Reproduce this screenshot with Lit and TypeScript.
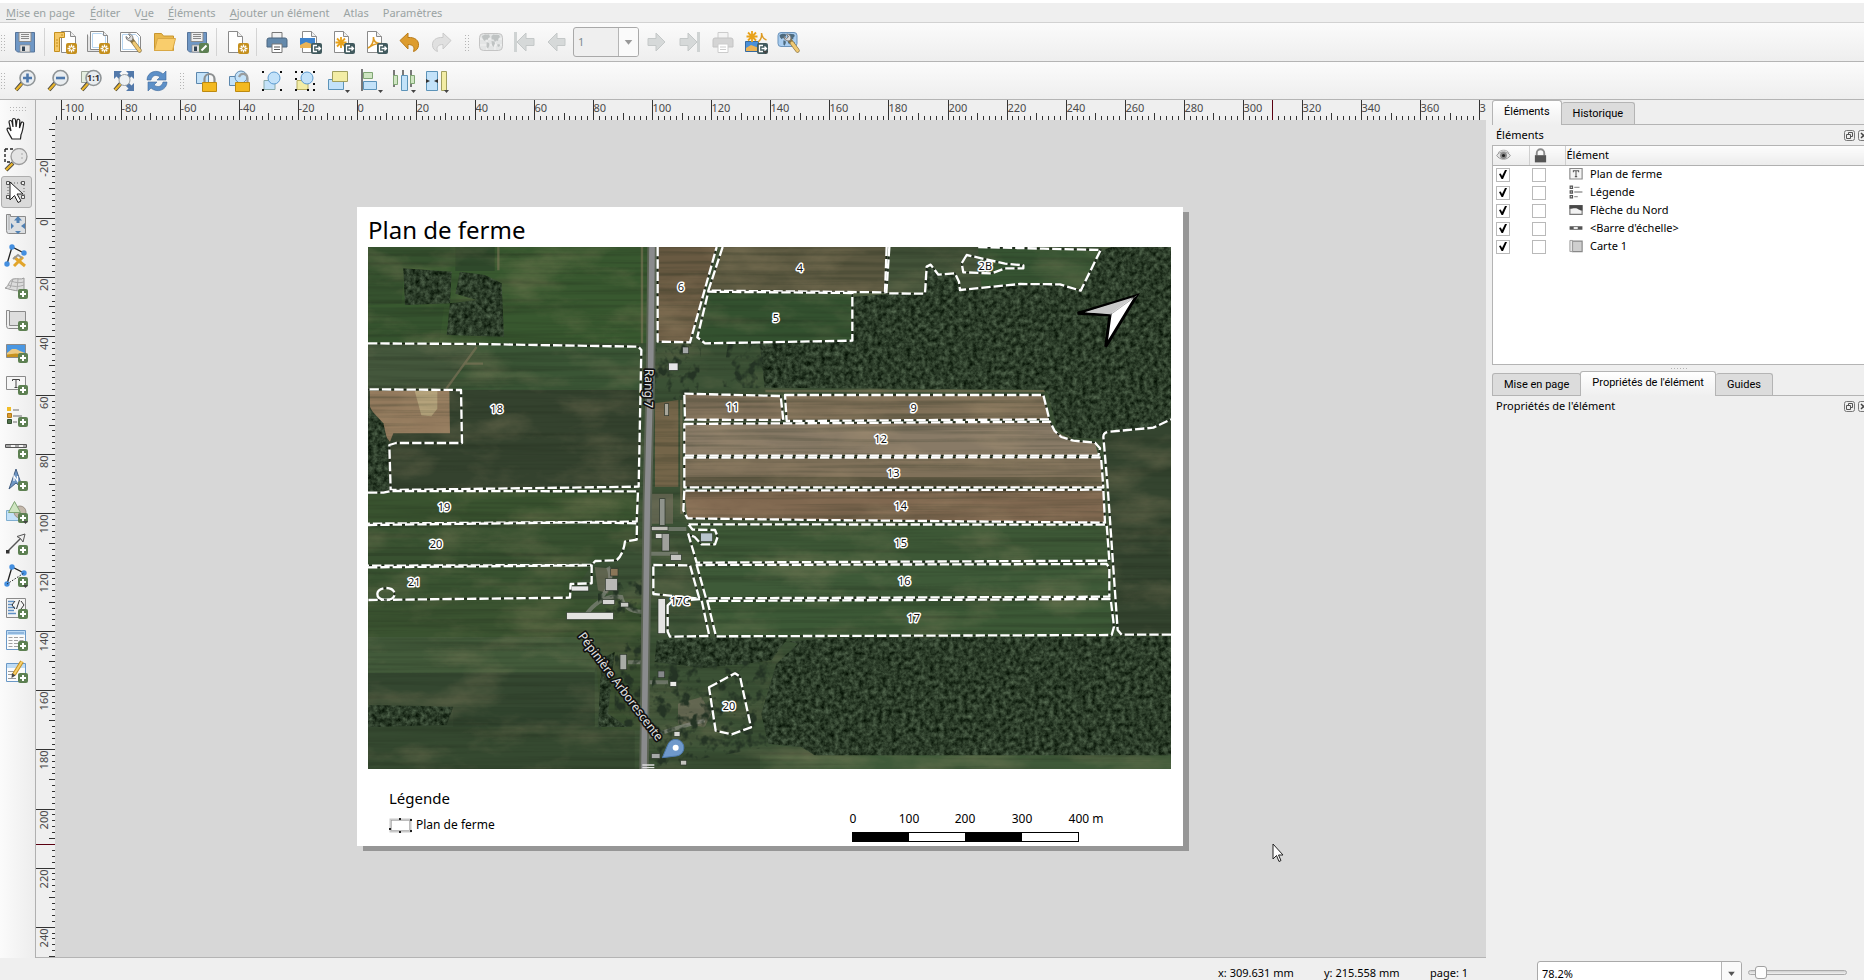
import { LitElement, html, svg, css } from "lit";
import { customElement, property } from "lit/decorators.js";

/* ---------- icon set, 24 x 24 grid ---------- */

const badge = svg`<rect x="14" y="13" width="10" height="10" rx="2" fill="#5d8052"/><path d="M19 15v6M16 18h6" stroke="#fff" stroke-width="2"/>`;
const dropMark = svg`<path d="M19 21h5l-2.500 3z" fill="#444"/>`;
const starBadge = svg`<rect x="13" y="13" width="11" height="11" rx="2" fill="#c48f1d"/><path d="M18.500 14.500v8M14.500 18.500h8M15.800 15.800l5.400 5.400M21.200 15.800l-5.400 5.400" stroke="#fff" stroke-width="1.300"/><circle cx="18.500" cy="18.500" r="1.200" fill="#c48f1d"/>`;
const exportBadge = svg`<rect x="13" y="13" width="11" height="11" rx="2" fill="#415a5e"/><path d="M19 15.500h-3.500v6H19M17.500 18.500h5M20.500 16.500l2 2-2 2" fill="none" stroke="#fff" stroke-width="1.300"/>`;
const sheet = svg`<path d="M3.500 1.500h9l5 5v16h-14z" fill="#fff" stroke="#8a8a8a"/><path d="M12.500 1.500v5h5" fill="#eee" stroke="#8a8a8a"/>`;
const floppy = svg`<path d="M2.500 2.500h19v19.500h-17l-2-2z" fill="#6f97c5" stroke="#56749a"/><path d="M6 2.500h12v9H6z" fill="#efefef" stroke="#8a8a8a"/><path d="M8 4.500h8M8 6.500h8M8 8.500h8" stroke="#888"/><path d="M7 15h10v7H7z" fill="#e2e2e2" stroke="#8a8a8a" stroke-width=".7"/><path d="M9 16.500h3V21H9z" fill="#345"/>`;
const lens = svg`<path d="M9 14l-6 7" stroke="#444" stroke-width="4"/><path d="M9 14.500l-6 6.500" stroke="#e8b52e" stroke-width="2.400"/><circle cx="14.500" cy="9" r="7.500" fill="#e9edf0" stroke="#8f9496" stroke-width="1.600"/>`;
const handles = svg`<path d="M2 2h2v2H2zM20 2h2v2h-2zM2 20h2v2H2zM20 20h2v2h-2z" fill="#111"/>`;
const wrench = svg`<path d="M12 9l8.500 11.500" stroke="#8b7440" stroke-width="4.400" stroke-linecap="round"/><path d="M15 13l5.500 7.500" stroke="#f0c973" stroke-width="3" stroke-linecap="round"/><path d="M7 6.500c0 4 4 5.500 6.500 3.500C15 7 12.500 3.500 9.500 4l2 2.800-2 1.800z" fill="#ddd" stroke="#777"/>`;
const vertices = svg`<path d="M3 20L8 3l12 6" fill="none" stroke="#222" stroke-width="1.300"/><circle cx="3" cy="20" r="2.700" fill="#448fe0"/><circle cx="8" cy="3" r="2.700" fill="#448fe0"/><circle cx="20" cy="9" r="2.700" fill="#448fe0"/>`;
const world = svg`<path d="M3 6l3-1.500h4L11 7 9.500 8 8.500 10 7 9.500 5.500 11 3.500 8.500zM7.500 12l2.500 1 .5 2-1.500 3.500L7.500 17zM12.500 6l2-1.500L20 5l1 2-1.500 1.500L19 11l-1.500-.5L16 12l-1.500-2.500h-2zM12.500 11l3 .5.5 2-1.500 3.500-1.500-2zM18 14.500l2.500-.5.5 2-2 1z"/>`;
const printer = svg`<path d="M7 2.500h10V9H7z" fill="#f2f2f2" stroke="#777"/><path d="M4 8h16q2 0 2 2v7H2v-7q0-2 2-2z" fill="#6489ab" stroke="#4c6680"/><path d="M7 14h10v8.500H7z" fill="#fff" stroke="#777"/><path d="M9 17h6M9 19.500h6" stroke="#555"/>`;
const printerGrey = svg`<path d="M7 2.500h10V9H7z" fill="#f4f4f4" stroke="#ccc"/><path d="M4 8h16q2 0 2 2v7H2v-7q0-2 2-2z" fill="#d4d4d4" stroke="#c4c4c4"/><path d="M7 14h10v8.500H7z" fill="#fff" stroke="#ccc"/><path d="M9 17h6M9 19.500h6" stroke="#ccc"/>`;
const photo = svg`<path d="M2.500 4.500h19v13h-19z" fill="#4a97e2" stroke="#8a8a8a"/><path d="M3 13l5-4h4l4 2 5 2v4H3z" fill="#ecca83"/><path d="M3 14.500l9-1 9 1.500v2H3z" fill="#c6921f"/>`;
const padlockBody = svg`<path d="M8.500 13.500h14v9h-14z" fill="#f3b920" stroke="#bd8a10"/>`;

const ICONS: Record<string, unknown> = {
  save: floppy,
  newLayout: svg`<path d="M8.500 1.500h9l5 5v16h-14z" fill="#fff" stroke="#8a8a8a"/><path d="M17.500 1.500v5h5" fill="#eee" stroke="#8a8a8a"/><path d="M1.500 2.500h10v5h-5v14h-5z" fill="#f5c866" stroke="#c48f1d"/><path d="M3 10h2M3 13h2M3 16h2M9 4v2" stroke="#c48f1d"/>${starBadge}`,
  duplicate: svg`<path d="M1.500 4.500v17h13v-3" fill="#e4e4e4" stroke="#8a8a8a"/><path d="M4.500 1.500h13l4 4v14h-17z" fill="#fff" stroke="#8a8a8a"/><path d="M6.500 3.500h9l4 3v11h-13z" fill="none" stroke="#b6d5f1"/><path d="M17.500 1.500v4h4" fill="#eee" stroke="#8a8a8a"/>${starBadge}`,
  manager: svg`<path d="M1.500 2.500h16l4 4v15h-20z" fill="#fff" stroke="#8a8a8a"/><path d="M3.500 4.500h13l3 3v12h-16z" fill="none" stroke="#b6d5f1"/>${wrench}`,
  open: svg`<path d="M2.500 20.500v-17h7l2 2.500h10v14.500z" fill="#e9b84c" stroke="#c9962f"/><path d="M2.500 20.500l3-12h18l-3 12z" fill="#f9cd6c" stroke="#d9a845"/>`,
  saveAs: svg`${floppy}<rect x="14" y="13" width="10" height="10" rx="2" fill="#5d8052"/><path d="M16.500 20.500l5-5" stroke="#fff" stroke-width="2"/>`,
  addPage: svg`<path d="M3.500 1.500h9l5 5v16h-14z" fill="#fff" stroke="#8a8a8a"/><path d="M12.500 1.500v5h5" fill="#eee" stroke="#8a8a8a"/>${starBadge}`,
  print: printer,
  exportImage: svg`<path d="M4.500 1.500h9l5 5v16h-14z" fill="#fff" stroke="#8a8a8a"/><path d="M13.500 1.500v5h5" fill="#eee" stroke="#8a8a8a"/><path d="M2 8h15v10H2z" fill="#3e83cd"/><path d="M2 15l6-3 9 3v3H2z" fill="#ecb456"/>${exportBadge}`,
  exportSvg: svg`${sheet}<path d="M10 7v11M4.500 12.500h11M6 8.500l8 8M14 8.500l-8 8" stroke="#e8a21b" stroke-width="1.800"/>${exportBadge}`,
  exportPdf: svg`${sheet}<path d="M4 18c4-2 6-7 5.500-11C9 11 12 14 17 13.500 12 13 8 15 4 18z" fill="none" stroke="#dd9a22" stroke-width="1.600"/>${exportBadge}`,
  undo: svg`<path d="M3 10.500l8-7.500v4.500c7-.5 11 3 10.500 8-.3 3-2 5-5 6 1.500-4.500-.5-7-5.500-7V19z" fill="#dd9c2e" stroke="#b87a18"/>`,
  redo: svg`<path d="M21 10.500L13 3v4.500C6 7 2 10.500 2.500 15.500c.3 3 2 5 5 6C6 17 8 14.500 13 14.500V19z" fill="#e0e0e0" stroke="#cacaca"/>`,
  atlas: svg`<rect x=".5" y="3.500" width="23" height="17" rx="4" fill="#e3e5e5" stroke="#c4c4c4"/><path d="M1 9h22M1 15h22M8 4v16M16 4v16" stroke="#f4f4f4"/><g fill="#bfc3c3">${world}</g>`,
  first: svg`<path d="M2 2h3v20H2z" fill="#cfd3d3"/><path d="M5 12l9-9v5.500h8v7h-8V21z" fill="#d6d9d9" stroke="#c4c8c8"/>`,
  prev: svg`<path d="M3 12l9-9v5.500h8v7h-8V21z" fill="#d6d9d9" stroke="#c4c8c8"/>`,
  next: svg`<path d="M20 12l-9-9v5.500H3v7h8V21z" fill="#d6d9d9" stroke="#c4c8c8"/>`,
  last: svg`<path d="M19 2h3v20h-3z" fill="#cfd3d3"/><path d="M19 12l-9-9v5.500H2v7h8V21z" fill="#d6d9d9" stroke="#c4c8c8"/>`,
  printAtlas: printerGrey,
  exportAtlas: svg`<path d="M1.500 11.500h13v10h-13z" fill="#4a90d9" stroke="#35699f"/><path d="M2 18l5-3 8 3v3H2z" fill="#ecb456"/><path d="M8 1v11M2.500 6.500h11M4 2.500l8 8M12 2.500l-8 8" stroke="#e8a21b" stroke-width="1.800"/><path d="M14 12c3-2 4-5 3.500-9 .5 4 2 6 5 7" fill="none" stroke="#dd9a22" stroke-width="1.500"/>${exportBadge}${dropMark}`,
  atlasSettings: svg`<rect x="1" y="2.500" width="19" height="14" rx="3" fill="#a9cdf0" stroke="#6b93ba"/><g fill="#4d6a7e" transform="translate(0 0) scale(.85)">${world}</g>${wrench}`,
  zoomIn: svg`${lens}<path d="M14.500 4.500v9M10 9h9" stroke="#4f79ac" stroke-width="2.600"/>`,
  zoomOut: svg`${lens}<path d="M10 9h9" stroke="#4f79ac" stroke-width="2.600"/>`,
  zoomOne: svg`<path d="M2.500 2.500h12v11h-12z" fill="#e5efe0" stroke="#9aa396"/>${lens}<text class="glyph" x="14.500" y="12" text-anchor="middle">1:1</text>`,
  zoomFull: svg`<path d="M2 2h8L7.500 4.500l5 5-3 3-5-5L2 10zM22 2h-8l2.500 2.500-5 5 3 3 5-5L22 10zM22 22h-8l2.500-2.500-5-5 3-3 5 5L22 14z" fill="#5379aa"/><path d="M9 14l-6 7" stroke="#444" stroke-width="4"/><path d="M9 14.500l-6 6.500" stroke="#e8b52e" stroke-width="2.400"/><circle cx="12.500" cy="11" r="5.500" fill="#eef1f3" stroke="#9a9fa1"/>`,
  refresh: svg`<path d="M2 11C2 3 12-.5 18 5l3-3v9h-9l3-3C11 5 7 6.500 6 11z" fill="#5d90c8" stroke="#40699a" stroke-width=".6"/><path d="M22 13c0 8-10 11.500-16 6l-3 3v-9h9l-3 3c4 3 8 1.500 9-3z" fill="#5d90c8" stroke="#40699a" stroke-width=".6"/>`,
  lock: svg`<path d="M2.500 3.500h12v11h-12z" fill="#c3e2f9" stroke="#5c87ad"/><path d="M10.500 14v-4a5 5 0 0 1 10 0v4" fill="none" stroke="#8c8f90" stroke-width="2.200"/>${padlockBody}`,
  unlock: svg`<path d="M2.500 7.500h12v9h-12z" fill="#c3e2f9" stroke="#5c87ad"/><circle cx="14" cy="8" r="6" fill="#c3e2f9" stroke="#5c87ad"/><path d="M12 8c2-5 8-3.500 8.500 1v5" fill="none" stroke="#9a9d9e" stroke-width="2.200"/>${padlockBody}`,
  group: svg`<path d="M4 11.500h11v9H4z" fill="#c3e2f9" stroke="#8aa"/><circle cx="14" cy="9" r="6" fill="#c3e2f9" stroke="#5c9bd0"/>${handles}`,
  ungroup: svg`<path d="M4 11.500h11v9H4z" fill="#f3eda5" stroke="#b5ad62"/><circle cx="14" cy="9" r="6" fill="#c3e2f9" stroke="#5c9bd0"/>${handles}<path d="M8 2h2v2H8zM20 14h2v2h-2zM2 9h2v2H2zM14 20h2v2h-2z" fill="#111"/>`,
  raise: svg`<path d="M2.500 10.500h15v10h-15z" fill="#c3e2f9" stroke="#5c93b8"/><path d="M6.500 2.500h15v10h-15z" fill="#f3eda5" stroke="#a09f5e"/>${dropMark}`,
  align: svg`<path d="M3 0v22" stroke="#444" stroke-width="1.400"/><path d="M4.500 3.500h9v6h-9z" fill="#cfe5c2" stroke="#7fa573"/><path d="M4.500 12.500h13v8h-13z" fill="#c3e2f9" stroke="#5c93b8"/>${dropMark}`,
  distribute: svg`<path d="M2 1v17M11 1v17M19 1v17" stroke="#444" stroke-width="1.400"/><path d="M1.500 6.500h4v9h-4zM18.500 6.500h4v8h-4z" fill="#cfe5c2" stroke="#7fa573"/><path d="M9.500 6.500h6v15h-6z" fill="#c3e2f9" stroke="#5c93b8"/>${dropMark}`,
  resize: svg`<path d="M1.500 2.500h11v19h-11z" fill="#c3e2f9" stroke="#5c93b8"/><path d="M16.500 2.500h5v19h-5z" fill="#f3eda5" stroke="#a09f5e"/><path d="M1 10l4 2-4 2M13 10l-4 2 4 2" fill="#333"/>${dropMark}`,
  pan: svg`<path d="M8 23c-2-4-5-8-5-10 1-2 3-.5 4 2L5 6c0-2 2.500-2 3 0l1 5-.5-7c0-2 2.800-2 3 0l.6 7L13 4.500c.3-2 2.800-1.500 2.800.3L15.500 12l1.600-5c.6-1.800 2.800-1 2.500.8-.6 5-1.600 9-2.600 11l-.5 4z" fill="#fff" stroke="#222" stroke-width="1.200"/>`,
  zoomArea: svg`<path d="M1 1h10M1 1v13h6" fill="none" stroke="#222" stroke-width="1.400" stroke-dasharray="3 2"/><path d="M9 15l-7 7" stroke="#444" stroke-width="4"/><path d="M8.500 15.500L2 22" stroke="#e8b52e" stroke-width="2.400"/><circle cx="15" cy="8.500" r="8" fill="#e2e2e2" fill-opacity=".9" stroke="#9a9a9a" stroke-width="1.300"/><path d="M18 5v2M18 9v2" stroke="#aaa"/>`,
  select: svg`<path d="M4 3h16v15H4z" fill="none" stroke="#666" stroke-dasharray="1 2"/><path d="M2.500 1.500h3v3h-3zM17.500 1.500h3v3h-3zM2.500 15.500h3v3h-3zM17.500 15.500h3v3h-3z" fill="#eee" stroke="#555"/><path d="M6 2l13 12h-6l4 7-3 1.500-3.500-7L6 20z" fill="#fff" stroke="#222"/>`,
  moveContent: svg`<path d="M2.500 2.500h4v2h15v17h-17q-2 0-2-3z" fill="#dcdfe2" stroke="#8a8a8a"/><path d="M5 3v15" stroke="#aaa"/><path d="M14 4l4 4.500h-2.500V11h-3V8.500H10zM14 22l-3-3h6zM7 11l3 3-3 3zM21 11l-4 3 4 3z" fill="#5181b3"/>`,
  editNodes: svg`${vertices}<path d="M10 22l9-9M10 13l11 9" stroke="#e2a52b" stroke-width="3"/><path d="M9 15l5-4 4 3" fill="none" stroke="#999" stroke-width="2"/>`,
  addMap3d: svg`<path d="M1 12c3 0 4-8 8-9 5-1 8 1 11-1v12c-5 2-12 0-19-2z" fill="#dcdcdc" stroke="#999"/><path d="M4 9c6 2 11 2 16 0M7 5c5 2 9 2 13 1M9 3l-3 9M14 3l-1 11" fill="none" stroke="#aaa"/>${badge}`,
  addMap: svg`<path d="M5.500 3.500h16v17h-16z" fill="#dedede" stroke="#8a8a8a"/><path d="M2.500 2.500h3v15h16v3h-17q-2 0-2-3z" fill="#eee" stroke="#8a8a8a"/>${badge}`,
  addPicture: svg`${photo}${badge}`,
  addLabel: svg`<path d="M2.500 4.500h19v13h-19z" fill="#f6f6f6" stroke="#8a8a8a"/><path d="M8.500 9V7.500h7V9M12 7.500v8M10.500 15.500h3" fill="none" stroke="#444"/>${badge}`,
  addLegend: svg`<path d="M3 3h4v4H3z" fill="#f1bd27"/><path d="M3.500 9.500h4v4h-4z" fill="#dd9a2e" stroke="#b07a1a"/><path d="M3.500 15.500h4v4h-4z" fill="#52744e" stroke="#355031"/><path d="M9 6h6M9 12h9M9 18h4" stroke="#999" stroke-width="1.500"/>${badge}`,
  addScale: svg`<path d="M1.500 8.500h21v3h-21z" fill="#f4f4f4" stroke="#555"/><path d="M2 10h5M11 10h4M19 10h3" stroke="#aaa" stroke-width="2"/>${badge}`,
  addNorth: svg`<path d="M12 1l7 20-7-6-7 6z" fill="#6f97c5" stroke="#445f82"/><path d="M10 13V8l3.500 5V8" fill="none" stroke="#fff" stroke-width="1.300"/>${badge}`,
  addShape: svg`<path d="M2.500 10.500h12v10h-12z" fill="#c3e2f9" stroke="#7faed0"/><circle cx="16" cy="12" r="6" fill="#c4b9ac" stroke="#9a9084"/><path d="M10.500 1.500l6 11h-12z" fill="#cfe5c2" stroke="#7fa573"/>${badge}${dropMark}`,
  addArrow: svg`<path d="M3 20L17 6" stroke="#555" stroke-width="1.400"/><path d="M21 2l-2 8-2.500-3.500L13 4.500z" fill="#eee" stroke="#555"/><path d="M2 18h3.500v3.500H2z" fill="#333"/>${badge}`,
  addNode: svg`${vertices}<path d="M3 20L20 9" stroke="#222" stroke-dasharray="1.500 1.500"/>${badge}${dropMark}`,
  addHtml: svg`<path d="M2.500 2.500h19v19h-19z" fill="#f4f4f4" stroke="#8a8a8a"/><path d="M4 5.500h6M4 8.500h5M4 11.500h7M4 14.500h6M4 17.500h8" stroke="#5e8fc4" stroke-width="1.600"/><path d="M11 5l-3 4 3 4M17 5l3 4-3 4M15.500 4l-3 9" fill="none" stroke="#333"/>${badge}`,
  addTable: svg`<path d="M2.500 2.500h19v19h-19z" fill="#fbfbfb" stroke="#6a98c6"/><path d="M3 3h18v4H3z" fill="#bfdcf5"/><path d="M4 5h16" stroke="#5e8fc4"/><path d="M4.500 9.500h4M10 9.500h4M15.500 9.500h4M4.500 12.500h4M10 12.500h4M15.500 12.500h4M4.500 15.500h4M10 15.500h4M4.500 18.500h4M10 18.500h4" stroke="#a0a0a0"/>${badge}`,
  addFixedTable: svg`<path d="M2.500 3.500h19v18h-19z" fill="#fbfbfb" stroke="#6a98c6"/><path d="M3 4h18v4H3z" fill="#bfdcf5"/><path d="M4 11.500h6M4 14.500h4M14 14.500h6M4 18.500h8" stroke="#999"/><path d="M18 1.500l-8 13" stroke="#c48f1d" stroke-width="4"/><path d="M18 1.500l-8 13" stroke="#f7cf6c" stroke-width="2"/><path d="M8 13l3.500 2.500L7.500 18z" fill="#444"/>${badge}`,
  label: svg`<path d="M1.500 2.500h21v18h-21z" fill="#f4f4f4" stroke="#8a8a8a" stroke-width="2"/><path d="M7.500 9V6.500h9V9M12 6.500v10M10 16.500h4" fill="none" stroke="#555" stroke-width="1.800"/>`,
  legend: svg`<path d="M2 2h4v4H2zM2 10h4v4H2zM2 18h4v4H2z" fill="#ddd" stroke="#555" stroke-width="2"/><path d="M9 4h9M9 12h14M9 20h6" stroke="#999" stroke-width="2.400"/>`,
  picture: svg`<path d="M1.500 4.500h21v15h-21z" fill="#f2f2f2" stroke="#777" stroke-width="2"/><path d="M1 4h22v9c-6 0-7-4-13-4-3 0-5 1-9 1z" fill="#484848"/>`,
  scale: svg`<path d="M1 9h22v6H1z" fill="#555"/><path d="M8 10.500h7v3H8z" fill="#fff"/>`,
  map: svg`<path d="M6 3.500h16.500v18H6z" fill="#cfcfcf" stroke="#888" stroke-width="2"/><path d="M1.500 2.500H6v19H1.500z" fill="#e6e6e6" stroke="#999" stroke-width="1.500"/>`,
  eye: svg`<path d="M1 12C6 4 18 4 23 12 18 20 6 20 1 12z" fill="#e2e2e2" stroke="#999" stroke-width="1.500"/><circle cx="12" cy="12" r="5.500" fill="#888"/><circle cx="12" cy="12" r="2.500" fill="#222"/><path d="M3 8C8 2 17 2 21 8" fill="none" stroke="#aaa" stroke-width="1.500"/>`,
  padlock: svg`<path d="M6 12V8a6 6 0 0 1 12 0v4" fill="none" stroke="#8b8b8b" stroke-width="3"/><path d="M3 11.500h18V23H3z" fill="#555"/>`,
};

@customElement("tool-icon")
class ToolIcon extends LitElement {
  @property() name = "";
  @property({ type: Number }) size = 24;
  static styles = css`
    :host { display: inline-flex; }
    .glyph { font: bold 9px "Open Sans", sans-serif; fill: #333; }
  `;
  render() {
    return html`<svg width=${this.size} height=${this.size} viewBox="0 0 24 24" aria-hidden="true">${ICONS[this.name]}</svg>`;
  }
}

/* ---------- millimetre rulers ---------- */

const PX_PER_MM = 2.9536;

@customElement("mm-ruler")
class MmRuler extends LitElement {
  @property({ type: Boolean }) vertical = false;
  @property({ type: Number }) zero = 0;
  @property({ type: Number }) from = 0;
  @property({ type: Number }) to = 0;
  @property({ type: Number }) marker = 0;
  static styles = css`
    :host { display: block; overflow: hidden; min-width: 0; min-height: 0; contain: size; }
    svg { display: block; width: 100%; height: 100%; overflow: hidden; }
    .tick { stroke: #333; stroke-width: 1; shape-rendering: crispEdges; }
    .marker { stroke: #5a0010; stroke-width: 1; shape-rendering: crispEdges; }
    .num { font: 11px "Noto Sans", "Open Sans", sans-serif; fill: #4a4a4a; }
  `;
  render() {
    const parts: unknown[] = [];
    for (let mm = this.from; mm <= this.to; mm += 2) {
      const p = Math.floor(this.zero + mm * PX_PER_MM) + 0.5;
      const len = mm % 20 === 0 ? 20 : mm % 10 === 0 ? 7 : 4;
      parts.push(this.vertical
        ? svg`<line class="tick" x1=${20 - len} x2="20" y1=${p} y2=${p} />`
        : svg`<line class="tick" y1=${20 - len} y2="20" x1=${p} x2=${p} />`);
      if (mm % 20 === 0) {
        parts.push(this.vertical
          ? svg`<text class="num" text-anchor="end" transform="translate(12 ${p + 1}) rotate(-90)">${mm}</text>`
          : svg`<text class="num" x=${p} y="12">${mm}</text>`);
      }
    }
    const m = this.marker + 0.5;
    parts.push(this.vertical
      ? svg`<line class="marker" x1="0" x2="20" y1=${m} y2=${m} />`
      : svg`<line class="marker" y1="0" y2="20" x1=${m} x2=${m} />`);
    return html`<svg aria-hidden="true">${parts}</svg>`;
  }
}

/* ---------- farm map ---------- */

const GROUND: [string, string][] = [
  ["0,0 842,0 842,289 0,289", "#38582f"],
  ["0,0 262,0 262,60 110,62 100,170 0,175", "#35512e"],
  ["262,0 380,0 380,72 262,72", "#2f492b"],
  ["0,180 228,180 215,280 0,285", "#35532e"],
  ["0,289 330,292 250,427 0,427", "#44573c"],
  ["330,292 815,300 815,429 240,427", "#3a5535"],
  ["0,429 812,429 812,719 0,734", "#34422e"],
  ["0,736 812,732 806,826 0,828", "#39532f"],
  ["0,834 806,830 800,880 745,940 0,954", "#385130"],
  ["0,960 670,955 606,1052 0,1058", "#385230"],
  ["0,1060 828,1055 828,1170 0,1170", "#3a5330"],
  ["0,1170 700,1170 680,1276 0,1278", "#425a3a"],
  ["0,1278 680,1276 680,1440 0,1440", "#344730"],
  ["256,1380 680,1380 680,1437 256,1440", "#30432d"],
  ["0,1440 800,1440 800,1566 0,1566", "#354930"],
  ["680,1170 828,1170 828,1450 700,1450", "#394f30"],
  ["869,0 1046,0 966,286 869,284", "#695a42"],
  ["1064,0 1556,0 1551,136 1021,131", "#5b5840"],
  ["1021,134 1453,138 1453,281 1011,289 988,271", "#33512f"],
  ["1559,0 1890,0 1890,120 1776,129 1761,79 1676,59 1671,140 1552,139", "#435339"],
  ["1830,0 2198,9 2138,131 2076,112 1840,118", "#365432"],
  ["861,469 931,459 931,719 861,719", "#746549"],
  ["949,440 1238,447 1246,519 951,518", "#80705a"],
  ["1251,444 2026,444 2044,517 1256,522", "#807058"],
  ["949,531 2046,524 2060,552 2116,581 2181,587 2191,627 949,627", "#887a66"],
  ["949,631 2199,630 2206,721 949,721", "#80715a"],
  ["949,690 2206,690 2206,721 949,721", "#625a44"],
  ["949,731 2206,727 2211,827 1356,819 958,814", "#806850"],
  ["961,830 2216,832 2224,941 986,949", "#3d5836"],
  ["986,954 2216,950 2224,1050 1014,1054", "#3e5a38"],
  ["1018,1062 2228,1054 2231,1164 1044,1168", "#3c5936"],
  ["2409,1163 2261,1163 2249,1149 2219,720 2206,569 2226,554 2356,542 2409,517", "#34442f"],
  ["6,431 244,431 246,559 76,559 66,584 46,559 6,479", "#937a5d"],
  ["140,431 208,431 208,485 190,508 160,505", "#b3a27a"],
  ["1176,1525 2409,1525 2409,1566 1176,1566", "#3f5a39"],
];

const WOODS = [
  "1453,150 1552,142 1671,142 1676,62 1688,56 1711,86 1761,82 1776,131 1956,113 2076,114 2138,133 2198,11 2230,0 2409,0 2409,515 2356,540 2226,552 2196,575 2110,572 2066,545 2040,440 2026,428 1190,422 1176,290 1453,283",
  "1176,1190 1400,1172 2409,1168 2409,1525 1340,1525 1300,1500 1200,1490 1180,1400 1225,1250 1290,1190 1230,1175",
  "866,1180 960,1172 1260,1172 1210,1240 1120,1252 1000,1262 860,1245",
  "106,64 251,74 246,169 111,174",
  "276,74 350,84 401,109 408,269 236,264 246,169 326,159 262,140",
  "0,479 46,529 61,594 63,729 0,734",
  "0,1374 256,1379 236,1434 0,1440",
  "700,1235 740,1215 720,1400 780,1440 690,1440",
];

const THICKETS = [
  "1080,290 1180,290 1190,425 1060,420",
  "862,280 960,280 1000,300 990,430 930,460 860,440",
  "860,1250 1220,1240 1180,1400 1200,1500 860,1560 840,1400",
  "690,1010 830,1000 828,1110 690,1110",
  "740,1200 828,1170 828,1440 740,1440",
];

const LIMITS = [
  "M0,289 L326,291 L811,299 L820,309 L812,719 L68,729 L64,594 L84,588 L282,588 L279,429 L0,427",
  "M0,737 L46,737 L68,732 L810,733 L806,824 L0,830",
  "M0,834 L640,826 L807,829 L806,878 L771,884 Q765,925 745,940 L682,942 L671,954 L0,956",
  "M0,961 L671,955 L671,1009 L608,1011 L606,1052 L0,1059",
  "M869,0 L869,284 L966,286 L1046,0",
  "M1064,0 L1021,131 L1551,136 L1556,0",
  "M1453,138 L1021,134 L988,271 L1011,289 L1453,281 Z",
  "M1564,0 L1555,139 L1671,140 L1676,59 L1688,53 L1711,83 L1761,79 L1773,104 L1776,129 L1956,111 L2076,112 L2138,131 L2198,9 L2026,5 L1830,0",
  "M1796,24 L1781,49 L1786,76 L1871,79 L1911,64 L1966,64 L1966,55 L1911,50 Z",
  "M949,440 L1238,447 L1246,519 L951,518 Z",
  "M1251,444 L2026,444 L2044,517 L1256,522 Z",
  "M949,531 L2046,524 L2060,552 L2080,570 L2116,581 L2181,587 L2196,604 L2191,626 L949,626 Z",
  "M949,632 L2199,631 L2206,721 L949,721 Z",
  "M949,731 L946,790 L958,814 L1356,819 L2211,827 L2206,728 Z",
  "M961,832 L974,848 L1041,849 L1049,869 L1041,892 L1000,892 L980,870 L961,862 L986,947 L2224,941 L2216,833 Z",
  "M986,954 L1014,1054 L2224,1049 L2224,962 L2216,951 Z",
  "M1018,1062 L1044,1168 L2231,1164 L2238,1139 L2228,1056 Z",
  "M2409,1163 L2261,1163 L2249,1149 L2219,720 L2206,569 Q2206,555 2226,554 L2356,542 L2409,517",
  "M856,954 L966,955 L994,1055 L856,1041 Z",
  "M899,1075 L911,1064 L1000,1056 L1024,1167 L906,1169 L899,1154 Z",
  "M1023,1321 L1101,1279 L1116,1289 L1149,1441 L1091,1462 L1043,1451 Z",
  "M28,1041 a26,18 0 1 0 52,0 a26,18 0 1 0 -52,0",
];

const PLOTS: [string, number, number][] = [
  ["18", 386, 487], ["6", 939, 121], ["4", 1296, 62], ["5", 1224, 212], ["2B", 1852, 57],
  ["11", 1094, 481], ["9", 1637, 482], ["12", 1538, 577], ["13", 1576, 677], ["14", 1598, 776],
  ["15", 1598, 889], ["16", 1609, 1002], ["17", 1637, 1112], ["19", 228, 779], ["20", 204, 891],
  ["21", 139, 1004], ["17C", 936, 1062], ["20", 1083, 1377],
];

const ROOFS: [number, number, number, number, string][] = [
  [610, 1017, 52, 15, "#e8e8e8"], [596, 1096, 140, 22, "#e3e3e0"], [712, 995, 36, 36, "#b9b9b6"],
  [704, 1058, 36, 14, "#d5d5d2"], [758, 1066, 24, 14, "#c8c8c4"], [728, 965, 22, 22, "#8a7658"],
  [870, 1055, 22, 105, "#e4e4e2"], [850, 838, 50, 12, "#c2c0bb"], [862, 860, 22, 14, "#dadad6"],
  [882, 860, 22, 52, "#9fa09c"], [908, 922, 32, 18, "#c4c4c0"], [875, 755, 16, 80, "#8f938c"],
  [902, 348, 28, 22, "#e4e4e6"], [944, 300, 18, 20, "#a5a8a8"], [756, 1222, 20, 46, "#a9aca6"],
  [906, 1304, 20, 14, "#ecece8"], [870, 1272, 20, 20, "#85888a"], [918, 1454, 18, 14, "#d8d8d4"],
  [998, 858, 36, 26, "#b8c4cd"], [850, 1520, 26, 14, "#a5a8a8"], [938, 1540, 18, 14, "#c5c5c0"],
  [890, 470, 12, 36, "#a8a69a"],
];

@customElement("farm-map")
class FarmMap extends LitElement {
  static styles = css`
    :host { display: block; }
    svg { display: block; width: 100%; height: auto; }
    .base { fill: none; stroke: #1d261b; stroke-width: 4; }
    .dash { fill: none; stroke: #fff; stroke-width: 7; stroke-dasharray: 28 9; stroke-linejoin: round; }
    .plot { font: 33px "Noto Sans", "Open Sans", sans-serif; fill: #111; stroke: #fff; stroke-width: 9; paint-order: stroke; stroke-linejoin: round; text-anchor: middle; }
    .place { font: 36px "Noto Sans", "Open Sans", sans-serif; fill: #e4e4e4; stroke: #111; stroke-width: 10; paint-order: stroke; stroke-linejoin: round; text-anchor: middle; }
    .path { fill: none; stroke: #8b7b5f; stroke-width: 7; opacity: .5; }
    .lane { fill: none; stroke: #8d8f88; stroke-width: 12; opacity: .6; }
    .yard { fill: #7d7464; opacity: .55; }
  `;
  render() {
    return html`<svg viewBox="0 0 2409 1566" role="img" aria-label="Carte 1">
      <defs>
        <filter id="woods" x="0" y="0" width="1" height="1" color-interpolation-filters="sRGB">
          <feTurbulence type="fractalNoise" baseFrequency="0.07" numOctaves="3" seed="4" />
          <feColorMatrix values=".42 0 0 0 -.04  .46 0 0 0 .005  .4 0 0 0 -.04  0 0 0 0 1" />
          <feComposite operator="in" in2="SourceAlpha" />
        </filter>
        <filter id="thicket" x="0" y="0" width="1" height="1" color-interpolation-filters="sRGB">
          <feTurbulence type="fractalNoise" baseFrequency="0.03" numOctaves="3" seed="9" />
          <feColorMatrix values="0 0 0 0 .14  0 0 0 0 .2  0 0 0 0 .14  5 0 0 0 -2.5" />
          <feComposite operator="in" in2="SourceAlpha" />
        </filter>
        <filter id="rows" x="0" y="0" width="1" height="1" color-interpolation-filters="sRGB">
          <feTurbulence type="fractalNoise" baseFrequency="0.0015 0.07" numOctaves="3" seed="2" />
          <feColorMatrix values="0 0 0 0 .12  0 0 0 0 .16  0 0 0 0 .1  .8 0 0 0 -.33" />
        </filter>
        <filter id="patches" x="0" y="0" width="1" height="1" color-interpolation-filters="sRGB">
          <feTurbulence type="fractalNoise" baseFrequency="0.005 0.012" numOctaves="5" seed="12" />
          <feColorMatrix values="0 0 0 0 .75  0 0 0 0 .65  0 0 0 0 .5  .55 0 0 0 -.25" />
        </filter>
      </defs>
      <rect width="2409" height="1566" fill="#3b5135" />
      ${GROUND.map(([points, fill]) => svg`<polygon points=${points} fill=${fill} />`)}
      <rect width="2409" height="1566" filter="url(#rows)" />
      <rect width="2409" height="1566" filter="url(#patches)" />
      <path class="path" d="M326,300 L235,425 M391,0 V70 M822,0 V289 M940,459 V800 M858,0 V284 M1192,432 H2030 M2046,440 Q2060,540 2110,572 M290,350 H345" />
      <path class="yard" d="M680,960 L740,965 720,1040 690,1030Z M850,740 L915,740 915,830 850,830Z M930,1370 L1000,1350 1030,1400 1010,1440 930,1430Z" />
      <path class="lane" d="M842,846 H955 M700,1052 Q740,1000 720,960 M650,1108 Q700,1040 760,1050 Q770,1095 825,1094 M842,1306 H900 M842,1470 Q930,1440 1010,1420 M842,920 H930 M780,1246 H826" />
      ${WOODS.map((points) => svg`<polygon points=${points} filter="url(#woods)" />`)}
      ${THICKETS.map((points) => svg`<polygon points=${points} filter="url(#thicket)" />`)}
      <path d="M852,0 L848,360 L838,760 L828,1566" fill="none" stroke="#5b6354" stroke-width="28" />
      <path d="M852,0 L848,360 L838,760 L828,1566" fill="none" stroke="#8a8b8d" stroke-width="17" />
      ${ROOFS.map(([x, y, w, h, fill]) => svg`<rect x=${x} y=${y} width=${w} height=${h} fill=${fill} stroke="#2c352b" stroke-width="2" />`)}
      ${LIMITS.map((d) => svg`<path class="base" d=${d} /><path class="dash" d=${d} />`)}
      ${PLOTS.map(([name, x, y]) => svg`<text class="plot" x=${x} y=${y + 12}>${name}</text>`)}
      <text class="place" transform="translate(830 424) rotate(91)">Rang 7</text>
      <text class="place" transform="translate(748 1326) rotate(53)">Pépinière Arborescente</text>
      <path d="M823,1554h36M823,1562h36" stroke="#ddd" stroke-width="4" />
      <path d="M883,1532 L899,1494 A25,25 0 1 1 925,1527 Z" fill="#6f99cb" stroke="#4d79ad" stroke-width="3" />
      <circle cx="923" cy="1502" r="9" fill="#fff" />
      <path d="M2306,146 L2129,199 L2226,204 L2213,299 Z" fill="#fff" stroke="#000" stroke-width="9" />
      <path d="M2296,151 L2150,196 L2226,202 Z" fill="#c9c9c9" />
      <path d="M2306,146 L2226,204" stroke="#888" stroke-width="2" />
    </svg>`;
  }
}

/* ---------- layout window ---------- */

type Tool = [icon: string, label: string, disabled?: boolean];

const MENUS = [
  ["", "M", "ise en page"], ["", "É", "diter"], ["V", "u", "e"], ["", "É", "léments"],
  ["", "A", "jouter un élément"], ["Atlas", "", ""], ["Paramètres", "", ""],
];

const FILE_TOOLS: Tool[][] = [
  [["save", "Sauvegarder le projet"]],
  [["newLayout", "Nouvelle mise en page"], ["duplicate", "Dupliquer la mise en page"], ["manager", "Gestionnaire de mise en page"], ["open", "Ajouter des éléments depuis un modèle"], ["saveAs", "Sauvegarder comme modèle"]],
  [["addPage", "Ajouter des pages"]],
  [["print", "Imprimer"], ["exportImage", "Exporter au format image"], ["exportSvg", "Exporter au format SVG"], ["exportPdf", "Exporter au format PDF"], ["undo", "Annuler"], ["redo", "Refaire", true]],
];
const ATLAS_BACK: Tool[] = [["atlas", "Aperçu de l'atlas", true], ["first", "Première entité", true], ["prev", "Entité précédente", true]];
const ATLAS_NEXT: Tool[] = [["next", "Entité suivante", true], ["last", "Dernière entité", true], ["printAtlas", "Imprimer l'atlas", true], ["exportAtlas", "Exporter l'atlas"], ["atlasSettings", "Paramètres de l'atlas"]];
const VIEW_TOOLS: Tool[] = [["zoomIn", "Zoom +"], ["zoomOut", "Zoom -"], ["zoomOne", "Zoomer à 100%"], ["zoomFull", "Zoom sur l'étendue"], ["refresh", "Actualiser la vue"]];
const ACTION_TOOLS: Tool[] = [["lock", "Verrouiller"], ["unlock", "Tout déverrouiller"], ["group", "Grouper"], ["ungroup", "Dégrouper"], ["raise", "Remonter"], ["align", "Aligner"], ["distribute", "Distribuer"], ["resize", "Redimensionner"]];
const SIDE_TOOLS: Tool[] = [
  ["pan", "Se déplacer"], ["zoomArea", "Zoom"], ["select", "Sélectionner"], ["moveContent", "Déplacer le contenu"],
  ["editNodes", "Éditer les nœuds"], ["addMap3d", "Ajouter une carte 3D"], ["addMap", "Ajouter une carte"],
  ["addPicture", "Ajouter une image"], ["addLabel", "Ajouter une étiquette"], ["addLegend", "Ajouter une légende"],
  ["addScale", "Ajouter une barre d'échelle"], ["addNorth", "Ajouter une flèche du Nord"], ["addShape", "Ajouter une forme"],
  ["addArrow", "Ajouter une flèche"], ["addNode", "Ajouter un nœud"], ["addHtml", "Ajouter du HTML"],
  ["addTable", "Ajouter une table d'attributs"], ["addFixedTable", "Ajouter une table fixe"],
];
const ITEMS = [["label", "Plan de ferme"], ["legend", "Légende"], ["picture", "Flèche du Nord"], ["scale", "<Barre d'échelle>"], ["map", "Carte 1"]];

@customElement("app-root")
class AppRoot extends LitElement {
  static styles = css`
    :host {
      display: flex; flex-direction: column; height: 100vh; box-sizing: border-box;
      padding-top: 3px; background: #fff; overflow: hidden;
      font: 11px/16px "Noto Sans", "Open Sans", sans-serif; color: #000;
    }
    * { box-sizing: border-box; }
    button, select, input { font: inherit; color: inherit; margin: 0; }
    button { border: 0; background: none; padding: 0; }

    .menubar { display: flex; height: 20px; background: #efefef; border-bottom: 1px solid #d2d2d2; flex: none; }
    .menubar button { padding: 0 7px; color: #9aa3a3; }
    .menubar button:first-child { padding-left: 6px; padding-right: 8px; }
    u { text-underline-offset: 2px; }

    .toolbar { display: flex; align-items: center; height: 39px; flex: none; background: linear-gradient(#fbfbfb, #eeeeee); border-bottom: 1px solid #b4b4b4; }
    .toolbar + .toolbar { height: 38px; }
    .toolbar button { width: 33px; height: 33px; display: grid; place-items: center; }
    .group { display: flex; align-items: center; }
    .group + .group::before { content: ""; width: 1px; height: 28px; margin: 0 3px; background: #d4d4d4; }
    .grip { width: 8px; height: 17px; flex: none; background: radial-gradient(circle, #b5b5b5 1px, transparent 1px) 0 0 / 3px 3px; background-clip: content-box; padding-right: 3px; }
    .grip.inner { width: 16px; padding: 0 5px; }

    .combo { position: relative; display: flex; }
    .combo select { appearance: none; width: 100%; border: 1px solid #a9a9a9; border-radius: 3px; outline: 0; }
    .combo svg { position: absolute; right: 1px; top: 1px; height: calc(100% - 2px); width: 20px; pointer-events: none; background: #fafafa; border-left: 1px solid #b5b5b5; border-radius: 0 2px 2px 0; }
    .combo.page { width: 66px; height: 30px; margin-right: 1px; }
    .combo.page select { background: #efefef; color: #7d8c90; padding: 0 4px; opacity: 1; }

    .main { display: grid; grid-template-columns: 36px minmax(0, 1fr) 378px; flex: 1; min-height: 0; background: #efefef; }
    .sidebar { display: flex; flex-direction: column; align-items: center; padding-top: 6px; border-right: 1px solid #b0b0b0; background: linear-gradient(90deg, #fbfbfb, #ededed); overflow: hidden; }
    .sidebar .grip { width: 17px; height: 6px; padding: 0; }
    .sidebar button { width: 31px; height: 32px; flex: none; display: grid; place-items: center; border-radius: 3px; margin-right: 3px; }
    .sidebar button.on { background: #dadada; border: 1px solid #adadad; }

    .view { display: grid; grid-template: 20px minmax(0, 1fr) / 19px minmax(0, 1fr); border-bottom: 1px solid #b4b4b4; min-width: 0; }
    .view .top { grid-column: 1 / 3; }
    .canvas { position: relative; overflow: hidden; background: #d7d7d7; }
    .sheet { position: absolute; left: 302px; top: 87px; width: 826px; height: 639px; padding: 0 12px 0 11px; background: #fff; box-shadow: 6px 5px 0 #969696; }
    .sheet h1 { margin: 0; padding-top: 5px; font-size: 24px; line-height: 35px; height: 40px; font-weight: 400; }
    .below { display: flex; justify-content: space-between; padding: 18px 63px 0 21px; }
    .legend h2 { margin: 0 0 7px; font-size: 15px; line-height: 22px; font-weight: 400; }
    .legend p { margin: 0; display: flex; align-items: center; gap: 4px; font-size: 12px; line-height: 18px; }
    .scalebar { margin-top: 23px; }
    .scalebar text { font: 12px "Noto Sans", "Open Sans", sans-serif; text-anchor: middle; }
    .cursor { position: absolute; left: 1217px; top: 723px; }

    .panel { display: flex; flex-direction: column; min-width: 0; overflow: hidden; padding: 0 0 0 6px; }
    .tabs { display: flex; align-items: flex-end; height: 25px; border-bottom: 1px solid #b4b4b4; flex: none; font-family: Roboto, "Noto Sans", sans-serif; }
    .tabs button { height: 22px; padding: 0 11px; border: 1px solid #b4b4b4; border-bottom: 0; border-left-width: 0; border-radius: 3px 3px 0 0; background: #dcdcdc; }
    .tabs button:first-child { border-left-width: 1px; }
    .tabs button.on { height: 25px; padding-bottom: 2px; margin-bottom: -1px; background: linear-gradient(#fff, #efefef); border-left-width: 1px; margin-left: -1px; }
    .tabs button.on:first-child { margin-left: 0; }
    .title { display: flex; align-items: center; height: 20px; padding-left: 4px; flex: none; }
    .title span { flex: 1; }
    .title div { display: flex; gap: 3px; margin-right: -5px; }
    .title svg { display: block; }
    .tree { height: 220px; border: 1px solid #b4b4b4; border-right: 0; background: #fff; flex: none; }
    table { width: 100%; border-collapse: collapse; table-layout: fixed; line-height: 14px; }
    th, td { padding: 0; text-align: left; font-weight: 400; height: 18px; }
    th { height: 19px; background: linear-gradient(#fdfdfd, #ececec); border-bottom: 1px solid #b0b0b0; border-right: 1px solid #cfcfcf; }
    th:last-child { border-right: 0; padding-left: 1px; }
    th tool-icon { margin-left: 3px; vertical-align: middle; }
    .c1, .c2 { width: 36px; }
    .row { display: flex; align-items: center; gap: 7px; padding-left: 4px; height: 16px; padding-bottom: 1px; }
    input[type="checkbox"] { appearance: none; display: grid; place-items: center; width: 14px; height: 14px; margin: 2px 0 2px 3px; border: 1px solid #b9b9b9; background: #fff; }
    input[type="checkbox"]:checked::after { content: ""; width: 8px; height: 9px; background: #000; clip-path: polygon(0 45%, 22% 40%, 38% 68%, 75% 0, 100% 0, 50% 100%, 32% 100%); }
    .splitter { height: 6px; display: grid; place-items: center; flex: none; }
    .splitter i { width: 17px; height: 3px; background: radial-gradient(circle, #b5b5b5 1px, transparent 1px) 0 0 / 3px 3px; }

    .status { display: flex; align-items: center; height: 22px; flex: none; background: #efefef; padding-top: 8px; overflow: hidden; justify-content: flex-end; padding-right: 17px; }
    .status span { width: 106px; }
    .status span.pg { width: 107px; }
    .combo.zoom { width: 205px; height: 25px; flex: none; margin-top: 1px; }
    .combo.zoom select { background: #fff; padding: 0 4px; }
    input[type="range"] { appearance: none; width: 99px; height: 14px; margin: 0 0 2px 6px; background: none; }
    input[type="range"]::-webkit-slider-runnable-track { height: 5px; border: 1px solid #a9a9a9; border-radius: 3px; background: linear-gradient(#d0d0d0, #f0f0f0); }
    input[type="range"]::-webkit-slider-thumb { appearance: none; width: 12px; height: 13px; margin-top: -5px; border: 1px solid #a0a0a0; border-radius: 3px; background: #fdfdfd; }
  `;

  private tool([icon, label, disabled]: Tool) {
    return html`<button aria-label=${label} ?disabled=${disabled}><tool-icon name=${icon}></tool-icon></button>`;
  }

  private arrow(fill: string) {
    return html`<svg viewBox="0 0 20 28" aria-hidden="true"><path d="M6 12h8l-4 5z" fill=${fill} /></svg>`;
  }

  private dockTitle(text: string) {
    return html`<div class="title"><span>${text}</span><div>
      <button aria-label="Détacher"><svg width="11" height="11"><rect x=".5" y=".5" width="10" height="10" rx="2" fill="none" stroke="#777" /><path d="M4.500 4.500v-2h4v4h-2M2.500 4.500h4v4h-4z" fill="none" stroke="#555" /></svg></button>
      <button aria-label="Fermer"><svg width="11" height="11"><rect x=".5" y=".5" width="10" height="10" rx="2" fill="none" stroke="#777" /><path d="M3 3l5 5M8 3l-5 5" stroke="#444" stroke-width="1.500" /></svg></button>
    </div></div>`;
  }

  render() {
    return html`
      <nav class="menubar">${MENUS.map(([a, k, b]) => html`<button>${a}${k ? html`<u>${k}</u>` : ""}${b}</button>`)}</nav>
      <div class="toolbar">
        <span class="grip"></span>
        ${FILE_TOOLS.map((g) => html`<div class="group">${g.map((t) => this.tool(t))}</div>`)}
        <span class="grip inner"></span>
        ${ATLAS_BACK.map((t) => this.tool(t))}
        <div class="combo page"><select aria-label="Page de l'atlas" disabled><option>1</option></select>${this.arrow("#999")}</div>
        ${ATLAS_NEXT.map((t) => this.tool(t))}
      </div>
      <div class="toolbar">
        <span class="grip"></span>
        ${VIEW_TOOLS.map((t) => this.tool(t))}
        <span class="grip inner"></span>
        ${ACTION_TOOLS.map((t) => this.tool(t))}
      </div>

      <div class="main">
        <div class="sidebar">
          <span class="grip"></span>
          ${SIDE_TOOLS.map(([icon, label]) => html`<button class=${icon === "select" ? "on" : ""} aria-label=${label}><tool-icon name=${icon}></tool-icon></button>`)}
        </div>

        <div class="view">
          <mm-ruler class="top" .zero=${321.3} .from=${-102} .to=${380} .marker=${1236}></mm-ruler>
          <mm-ruler vertical .zero=${98.3} .from=${-32} .to=${250} .marker=${724}></mm-ruler>
          <div class="canvas">
            <article class="sheet">
              <h1>Plan de ferme</h1>
              <farm-map></farm-map>
              <div class="below">
                <section class="legend">
                  <h2>Légende</h2>
                  <p><svg width="23" height="15" aria-hidden="true"><rect x="1.500" y="1.500" width="20" height="12" fill="none" stroke="#c9c9c9" stroke-width="2" /><rect x="2.500" y="2.500" width="18" height="10" fill="#fff" stroke="#999" stroke-width=".6" /><path d="M0 10h2v2H0zM10 0h2v2h-2zM21 1h2v2h-2zM10 13h2v2h-2zM21 12h2v2h-2z" fill="#222" /></svg>Plan de ferme</p>
                </section>
                <svg class="scalebar" width="260" height="34" role="img" aria-label="Barre d'échelle">
                  <rect x="4.500" y="22.500" width="226" height="9" fill="#fff" stroke="#000" />
                  <path d="M4 22h57v10H4zM117 22h57v10h-57z" />
                  <text x="5" y="13">0</text><text x="61" y="13">100</text><text x="117" y="13">200</text><text x="174" y="13">300</text><text x="238" y="13">400 m</text>
                </svg>
              </div>
            </article>
            <svg class="cursor" width="12" height="20" aria-hidden="true"><path d="M1 1v15l3.500-3.500 2.500 6 2-1-2.500-5.500H11z" fill="#fff" stroke="#222" /></svg>
          </div>
        </div>

        <aside class="panel">
          <div class="tabs" role="tablist"><button class="on" role="tab" aria-selected="true">Éléments</button><button role="tab">Historique</button></div>
          ${this.dockTitle("Éléments")}
          <div class="tree">
            <table>
              <thead><tr><th class="c1"><tool-icon name="eye" .size=${15}></tool-icon></th><th class="c2"><tool-icon name="padlock" .size=${15}></tool-icon></th><th>Élément</th></tr></thead>
              <tbody>${ITEMS.map(([icon, name]) => html`<tr>
                <td><input type="checkbox" checked aria-label="Visible : ${name}" /></td>
                <td><input type="checkbox" aria-label="Verrouillé : ${name}" /></td>
                <td><div class="row"><tool-icon name=${icon} .size=${14}></tool-icon>${name}</div></td>
              </tr>`)}</tbody>
            </table>
          </div>
          <div class="splitter"><i></i></div>
          <div class="tabs" role="tablist"><button role="tab">Mise en page</button><button class="on" role="tab" aria-selected="true">Propriétés de l'élément</button><button role="tab">Guides</button></div>
          ${this.dockTitle("Propriétés de l'élément")}
        </aside>
      </div>

      <footer class="status">
        <span>x: 309.631 mm</span><span>y: 215.558 mm</span><span class="pg">page: 1</span>
        <div class="combo zoom"><select aria-label="Zoom"><option>78.2%</option></select>${this.arrow("#555")}</div>
        <input type="range" min="0" max="100" value="7" aria-label="Niveau de zoom" />
      </footer>
    `;
  }
}
